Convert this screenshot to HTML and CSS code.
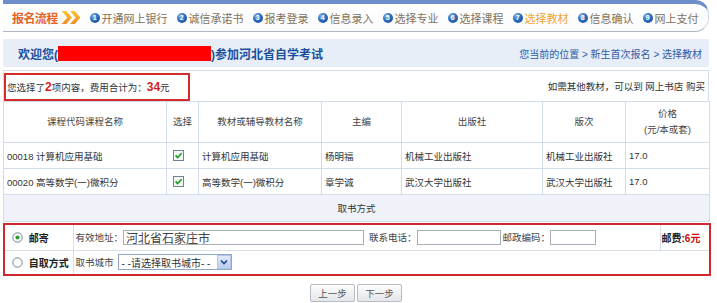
FILE: index.html
```html
<!DOCTYPE html>
<html lang="zh-CN">
<head>
<meta charset="utf-8">
<title>选择教材</title>
<link rel="stylesheet" href="styles.css">
</head>
<body>
<div class="wrap">
  <div class="header">
    <span class="flow-title">报名流程</span>
    <svg class="chev" viewBox="0 0 22 16" aria-hidden="true">
      <defs>
        <linearGradient id="cg" x1="0" y1="0" x2="0" y2="1">
          <stop offset="0" stop-color="#fcc53a"/>
          <stop offset="1" stop-color="#f08a1c"/>
        </linearGradient>
      </defs>
      <path d="M1 1 H6 L12 8 L6 15 H1 L7 8 Z" fill="url(#cg)"/>
      <path d="M10 1 H15 L21 8 L15 15 H10 L16 8 Z" fill="url(#cg)"/>
    </svg>
    <ol class="steps">
      <li><span class="num">1</span>开通网上银行</li>
      <li><span class="num">2</span>诚信承诺书</li>
      <li><span class="num">3</span>报考登录</li>
      <li><span class="num">4</span>信息录入</li>
      <li><span class="num">5</span>选择专业</li>
      <li><span class="num">6</span>选择课程</li>
      <li class="current"><span class="num">7</span>选择教材</li>
      <li><span class="num">8</span>信息确认</li>
      <li><span class="num">9</span>网上支付</li>
    </ol>
  </div>

  <div class="welcome">
    <div class="welcome-text">欢迎您(<span class="redact"></span>)参加河北省自学考试</div>
    <div class="crumb">您当前的位置 &gt; 新生首次报名 &gt; 选择教材</div>
  </div>

  <div class="summary">
    <div class="summary-box">您选择了<b>2</b>项内容，费用合计为：<b>34</b>元</div>
    <div class="summary-more">如需其他教材，可以到 网上书店 购买</div>
  </div>

  <table class="books">
    <colgroup>
      <col class="c1"><col class="c2"><col class="c3"><col class="c4"><col class="c5"><col class="c6"><col class="c7">
    </colgroup>
    <thead>
      <tr>
        <th>课程代码课程名称</th>
        <th>选择</th>
        <th>教材或辅导教材名称</th>
        <th>主编</th>
        <th>出版社</th>
        <th>版次</th>
        <th>价格<br>(元/本或套)</th>
      </tr>
    </thead>
    <tbody>
      <tr>
        <td>00018 计算机应用基础</td>
        <td class="chk-cell"><svg class="chk" viewBox="0 0 11 11" aria-hidden="true"><rect x="0.5" y="0.5" width="10" height="10" fill="#f3f6f1" stroke="#71839a"/><path d="M2.6 5.4 L4.6 7.6 L8.6 3.2" fill="none" stroke="#1f9a2b" stroke-width="1.6"/></svg></td>
        <td>计算机应用基础</td>
        <td>杨明福</td>
        <td>机械工业出版社</td>
        <td>机械工业出版社</td>
        <td>17.0</td>
      </tr>
      <tr>
        <td>00020 高等数学(一)微积分</td>
        <td class="chk-cell"><svg class="chk" viewBox="0 0 11 11" aria-hidden="true"><rect x="0.5" y="0.5" width="10" height="10" fill="#f3f6f1" stroke="#71839a"/><path d="M2.6 5.4 L4.6 7.6 L8.6 3.2" fill="none" stroke="#1f9a2b" stroke-width="1.6"/></svg></td>
        <td>高等数学(一)微积分</td>
        <td>章学诚</td>
        <td>武汉大学出版社</td>
        <td>武汉大学出版社</td>
        <td>17.0</td>
      </tr>
      <tr class="pick-row">
        <td colspan="7">取书方式</td>
      </tr>
    </tbody>
  </table>

  <table class="delivery">
    <colgroup><col class="d1"><col class="d2"><col class="d3"></colgroup>
    <tbody>
      <tr class="r1">
        <td class="opt">
          <svg class="radio" viewBox="0 0 11 11" aria-hidden="true"><circle cx="5.5" cy="5.5" r="4.7" fill="#fdfdfd" stroke="#6f8299"/><circle cx="5.5" cy="5.5" r="2.1" fill="#2e9a3a"/></svg>
          <b>邮寄</b>
        </td>
        <td>
          <div class="fields">
            <span class="lbl">有效地址：</span><input class="inp addr" type="text" value="河北省石家庄市">
            <span class="lbl gap">联系电话：</span><input class="inp phone" type="text" value="">
            <span class="lbl gap2">邮政编码：</span><input class="inp zip" type="text" value="">
          </div>
        </td>
        <td class="fee"><b>邮费:</b><b class="red">6元</b></td>
      </tr>
      <tr class="r2">
        <td class="opt">
          <svg class="radio" viewBox="0 0 11 11" aria-hidden="true"><circle cx="5.5" cy="5.5" r="4.7" fill="#fdfdfd" stroke="#6f8299"/></svg>
          <b>自取方式</b>
        </td>
        <td colspan="2">
          <div class="fields">
            <span class="lbl">取书城市</span>
            <div class="select"><span>- -请选择取书城市- -</span><i class="arrow"><svg viewBox="0 0 12 12" aria-hidden="true"><path d="M3 4.5 L6 7.5 L9 4.5" fill="none" stroke="#1e428f" stroke-width="1.6"/></svg></i></div>
          </div>
        </td>
      </tr>
    </tbody>
  </table>

  <div class="actions">
    <button class="btn" type="button">上一步</button>
    <button class="btn" type="button">下一步</button>
  </div>
</div>
</body>
</html>
```

FILE: styles.css
```css
* { box-sizing: border-box; }
html, body { margin: 0; padding: 0; background: #fff; }
body {
  font-family: "Liberation Sans", "Noto Sans CJK SC", sans-serif;
  font-size: 9.5px;
  color: #333;
}
.wrap { width: 706px; margin-left: 3px; }

/* header / flow */
.header {
  height: 32px;
  border-top: 4px solid #6a8fcb;
  border-bottom: 1px solid #aeb7c6;
  border-right: 1px solid #d3d9e2;
  border-radius: 0 14px 14px 0;
  display: flex;
  align-items: center;
  padding-left: 9px;
  background: linear-gradient(#ffffff, #fafbfd);
}
.flow-title {
  font-family: "Noto Sans CJK SC", sans-serif;
  font-size: 12px;
  font-weight: bold;
  color: #e5641f;
  letter-spacing: -0.6px;
}
.chev { width: 22px; height: 15px; margin-left: 2px; }
.steps {
  list-style: none;
  margin: 0 0 0 8px;
  padding: 0;
  display: flex;
  gap: 9px;
}
.steps li {
  display: flex;
  align-items: center;
  gap: 2px;
  font-family: "Noto Sans CJK SC", sans-serif;
  font-size: 11px;
  color: #7f735b;
}
.steps li.current { color: #efa632; }
.num {
  width: 10px;
  height: 10px;
  border-radius: 50%;
  background: radial-gradient(circle at 35% 30%, #86b6ee 0, #2c6bbb 45%, #134a96 100%);
  color: #fff;
  font-family: "Liberation Sans", sans-serif;
  font-size: 7px;
  font-weight: bold;
  line-height: 1;
  display: flex;
  align-items: center;
  justify-content: center;
}

/* welcome bar */
.welcome {
  margin-top: 7px;
  height: 28px;
  background: #e7eef8;
  display: flex;
  align-items: center;
  justify-content: space-between;
  padding: 0 7px 0 15px;
}
.welcome-text {
  display: flex;
  align-items: center;
  font-size: 12px;
  font-weight: bold;
  color: #1b4f9d;
}
.redact {
  display: inline-block;
  width: 153px;
  height: 15px;
  background: #ff0000;
}
.crumb { font-size: 10px; color: #2d5ca9; }

/* summary */
.summary {
  margin-top: 3px;
  height: 31px;
  border: 1px solid #d3dcea;
  border-bottom: 0;
  display: flex;
  align-items: flex-end;
  justify-content: space-between;
}
.summary-box {
  width: 186px;
  height: 28px;
  border: 2px solid #d42b2b;
  display: flex;
  align-items: center;
  padding-left: 1px;
  font-size: 9.5px;
}
.summary-box b { color: #d21f1f; font-size: 12px; }
.summary-more {
  height: 28px;
  line-height: 28px;
  padding-right: 3px;
  font-size: 9.5px;
}

/* books table */
.books {
  width: 706px;
  border-collapse: collapse;
  table-layout: fixed;
}
.c1 { width: 163px; }
.c2 { width: 32px; }
.c3 { width: 123px; }
.c4 { width: 80px; }
.c5 { width: 141px; }
.c6 { width: 83px; }
.c7 { width: 84px; }
.books th, .books td {
  border: 1px solid #d3dcea;
  padding: 0 3px;
  font-weight: normal;
  white-space: nowrap;
}
.books th { text-align: center; color: #444; line-height: 16px; }
.books thead tr { height: 41px; }
.books tbody tr { height: 26px; }
.books td.chk-cell { padding-left: 6px; }
.chk { width: 11px; height: 11px; display: block; }
.books .pick-row { height: 27px; }
.books .pick-row td { text-align: center; background: #eff3f9; }

/* delivery table */
.delivery {
  width: 706px;
  margin-top: 1px;
  border-collapse: collapse;
  table-layout: fixed;
  border: 2px solid #d1272e;
}
.d1 { width: 69px; }
.d2 { width: 587px; }
.d3 { width: 50px; }
.delivery td {
  border: 1px solid #d7dfeb;
  padding: 0 2px;
  white-space: nowrap;
}
.delivery td:first-child { border-left: 2px solid #d1272e; }
.delivery .r1 { height: 26px; }
.delivery .r2 { height: 25px; }
.delivery td.opt {
  padding-left: 7px;
}
.opt b { font-size: 10px; color: #222; vertical-align: middle; margin-left: 3px; }
.radio { width: 11px; height: 11px; vertical-align: middle; }
.fields { display: flex; align-items: center; }
.lbl { font-size: 9.5px; color: #444; }
.lbl.gap { margin-left: 5px; }
.lbl.gap2 { margin-left: 2px; }
.inp {
  height: 15px;
  border: 1px solid #a8aeb8;
  padding: 0 2px;
  margin: 0;
  font-family: "Noto Sans CJK SC", sans-serif;
  font-size: 12px;
  color: #444;
  background: #fff;
  outline: none;
}
.addr { width: 241px; }
.phone { width: 84px; }
.zip { width: 46px; }
.delivery td.fee { text-align: left; padding-left: 1px; font-size: 10px; }
.fee b { font-weight: bold; color: #222; }
.fee b.red { color: #cc0a0a; }

.select {
  margin-left: 4px;
  width: 114px;
  height: 16px;
  border: 1px solid #8ea7c6;
  display: flex;
  align-items: center;
  justify-content: space-between;
  padding-left: 3px;
  font-size: 10px;
  color: #333;
  background: #fff;
}
.arrow {
  width: 14px;
  height: 14px;
  border: 1px solid #b4c6e4;
  background: linear-gradient(#e2ebfa, #b9cdee);
  display: flex;
  align-items: center;
  justify-content: center;
}
.arrow svg { width: 12px; height: 12px; display: block; }

/* buttons */
.actions {
  margin-top: 8px;
  display: flex;
  justify-content: center;
  gap: 2px;
}
.btn {
  width: 45px;
  height: 18px;
  margin: 0;
  padding: 0;
  border: 1px solid #b6bbc4;
  border-radius: 2px;
  background: linear-gradient(#fdfdfd, #e3e6ea);
  font-family: "Noto Sans CJK SC", sans-serif;
  font-size: 9.5px;
  color: #555;
}
```
